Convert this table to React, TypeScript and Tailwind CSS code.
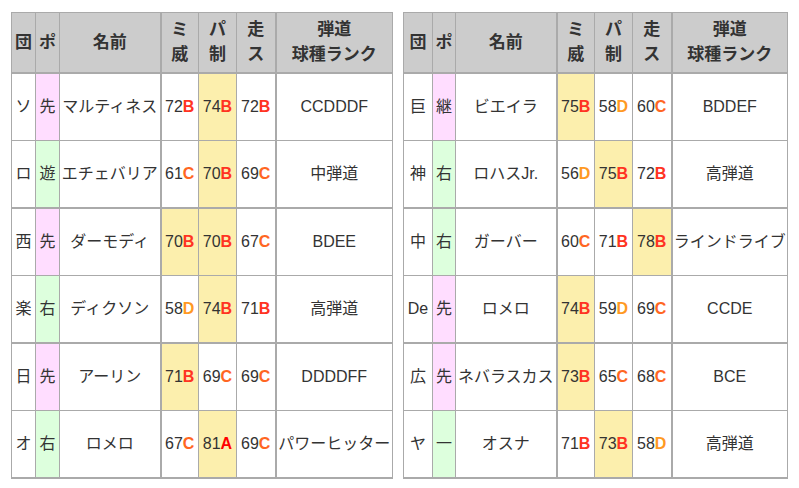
type Stat = [string, boolean];

interface Player {
  team: string;
  pos: string;
  name: string;
  mi: Stat;
  pa: Stat;
  so: Stat;
  rank: string;
}

const gradeColor: Record<string, string> = {
  A: "text-[#f00]",
  B: "text-[#f32]",
  C: "text-[#f62]",
  D: "text-[#f92]",
};

// 先・継 = pink, others = green
const posBg = (pos: string) => (pos === "先" || pos === "継" ? "bg-[#fdf]" : "bg-[#dfd]");

const left: Player[] = [
  { team: "ソ", pos: "先", name: "マルティネス", mi: ["72B", false], pa: ["74B", true], so: ["72B", false], rank: "CCDDDF" },
  { team: "ロ", pos: "遊", name: "エチェバリア", mi: ["61C", false], pa: ["70B", true], so: ["69C", false], rank: "中弾道" },
  { team: "西", pos: "先", name: "ダーモディ", mi: ["70B", true], pa: ["70B", true], so: ["67C", false], rank: "BDEE" },
  { team: "楽", pos: "右", name: "ディクソン", mi: ["58D", false], pa: ["74B", true], so: ["71B", false], rank: "高弾道" },
  { team: "日", pos: "先", name: "アーリン", mi: ["71B", true], pa: ["69C", false], so: ["69C", false], rank: "DDDDFF" },
  { team: "オ", pos: "右", name: "ロメロ", mi: ["67C", false], pa: ["81A", true], so: ["69C", false], rank: "パワーヒッター" },
];

const right: Player[] = [
  { team: "巨", pos: "継", name: "ビエイラ", mi: ["75B", true], pa: ["58D", false], so: ["60C", false], rank: "BDDEF" },
  { team: "神", pos: "右", name: "ロハスJr.", mi: ["56D", false], pa: ["75B", true], so: ["72B", false], rank: "高弾道" },
  { team: "中", pos: "右", name: "ガーバー", mi: ["60C", false], pa: ["71B", false], so: ["78B", true], rank: "ラインドライブ" },
  { team: "De", pos: "先", name: "ロメロ", mi: ["74B", true], pa: ["59D", false], so: ["69C", false], rank: "CCDE" },
  { team: "広", pos: "先", name: "ネバラスカス", mi: ["73B", true], pa: ["65C", false], so: ["68C", false], rank: "BCE" },
  { team: "ヤ", pos: "一", name: "オスナ", mi: ["71B", false], pa: ["73B", true], so: ["58D", false], rank: "高弾道" },
];

function StatCell({ stat, thick }: { stat: Stat; thick?: boolean }) {
  const [v, hl] = stat;
  const num = v.slice(0, -1);
  const g = v.slice(-1);
  return (
    <td
      className={`border border-[#aaa] text-center px-0 ${thick ? "border-r-2" : ""} ${hl ? "bg-[#fcefad]" : ""}`}
    >
      {num}
      <b className={gradeColor[g]}>{g}</b>
    </td>
  );
}

function PlayerTable({ rows, widths }: { rows: Player[]; widths: number[] }) {
  const pairs = [rows.slice(0, 2), rows.slice(2, 4), rows.slice(4, 6)];
  const th = "border border-[#aaa] bg-[#ccc] font-bold px-0";
  return (
    <table className="table-fixed border-collapse border border-[#aaa] text-[16px] text-[#333]">
      <colgroup>
        {widths.map((w, i) => (
          <col key={i} style={{ width: w }} />
        ))}
      </colgroup>
      <thead className="border-b-2 border-[#aaa]">
        <tr className="h-[60px] text-[17px] leading-[25px]">
          <th className={th}>団</th>
          <th className={th}>ポ</th>
          <th className={`${th} border-r-2`}>名前</th>
          <th className={th}>ミ<br />威</th>
          <th className={th}>パ<br />制</th>
          <th className={`${th} border-r-2`}>走<br />ス</th>
          <th className={th}>弾道<br />球種ランク</th>
        </tr>
      </thead>
      {pairs.map((pair, i) => (
        <tbody key={i} className="border-b-2 border-[#aaa]">
          {pair.map((p) => (
            <tr key={p.team} className="h-[67.5px]">
              <td className="border border-[#aaa] text-center px-0">{p.team}</td>
              <td className={`border border-[#aaa] text-center px-0 ${posBg(p.pos)}`}>{p.pos}</td>
              <td className="border border-[#aaa] border-r-2 text-center px-0 whitespace-nowrap">{p.name}</td>
              <StatCell stat={p.mi} />
              <StatCell stat={p.pa} />
              <StatCell stat={p.so} thick />
              <td className="border border-[#aaa] text-center px-0 whitespace-nowrap">{p.rank}</td>
            </tr>
          ))}
        </tbody>
      ))}
    </table>
  );
}

export default function App() {
  return (
    <div
      className="w-[799px] h-[488px] bg-white flex items-start gap-[10px] pl-[11px] pt-[12px]"
      style={{ fontFamily: '"Liberation Sans", "Noto Sans CJK JP", sans-serif' }}
    >
      <PlayerTable rows={left} widths={[24, 24, 101, 38, 38, 39, 117]} />
      <PlayerTable rows={right} widths={[29, 23, 101, 38, 38, 39, 116]} />
    </div>
  );
}
